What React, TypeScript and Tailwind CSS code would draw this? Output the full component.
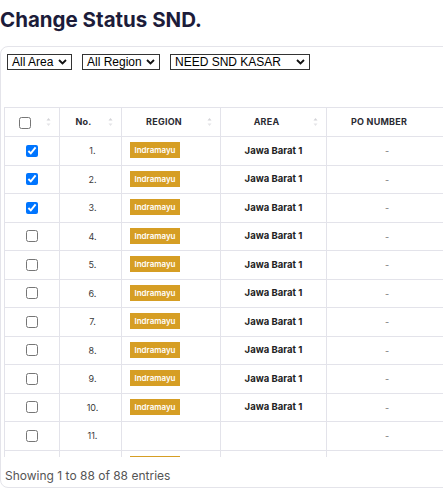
const rows = Array.from({ length: 12 }, (_, i) => ({
  no: i + 1,
  checked: i < 3,
  region: i === 10 ? '' : 'Indramayu',
  area: i === 10 ? '' : 'Jawa Barat 1',
}));

function Chevron() {
  return (
    <svg width="9" height="6" viewBox="0 0 9 6" className="ml-1 shrink-0">
      <path d="M1 1l3.5 3.5L8 1" fill="none" stroke="#111" strokeWidth="1.8" />
    </svg>
  );
}

function FakeSelect({ label, width }: { label: string; width: string }) {
  return (
    <div
      className={`flex items-center justify-between h-[16px] border border-[#333] bg-white px-[4px] text-[12px] text-black ${width}`}
      style={{ fontFamily: '"Liberation Sans", Arial, sans-serif' }}
    >
      <span className="leading-none">{label}</span>
      <Chevron />
    </div>
  );
}

function SortIcon() {
  return (
    <svg width="5" height="9" viewBox="0 0 5 9" className="absolute right-[8px] top-1/2 -translate-y-1/2">
      <path d="M2.5 0.5L4.5 3H0.5z" fill="#d4d4d8" />
      <path d="M2.5 8.5L4.5 6H0.5z" fill="#e4e4e7" />
    </svg>
  );
}

function Th({ children, className = 'pr-[14px]' }: { children?: React.ReactNode; className?: string }) {
  return (
    <th className={`relative border-r border-[#e3e3ea] h-[29px] text-[9px] font-bold text-[#2b2b33] tracking-wide ${className}`}>
      {children}
      <SortIcon />
    </th>
  );
}

export default function App() {
  return (
    <div className="w-[443px] h-[489px] overflow-hidden bg-white" style={{ fontFamily: 'Inter, "Noto Sans", sans-serif' }}>
      <h1 className="h-[46px] pt-[7px] text-[20.5px] font-bold text-[#1c1c3a] leading-[26px]">
        Change Status SND.
      </h1>
      <div className="w-[460px] h-[442px] border border-[#e4e4ea] rounded-[8px] flex flex-col">
        <div className="flex pl-[6px] pt-[7px] h-[60px] items-start gap-[10px]">
          <FakeSelect label="All Area" width="w-[65px]" />
          <FakeSelect label="All Region" width="w-[78px]" />
          <FakeSelect label="NEED SND KASAR" width="w-[140px]" />
        </div>
        <div className="h-[350px] overflow-hidden pl-[3px]">
          <table className="border-collapse border-l border-t border-[#e3e3ea] table-fixed w-[520px]">
            <colgroup>
              <col className="w-[55px]" />
              <col className="w-[62px]" />
              <col className="w-[99px]" />
              <col className="w-[106px]" />
              <col className="w-[198px]" />
            </colgroup>
            <thead>
              <tr className="border-b border-[#e3e3ea]">
                <Th>
                  <input type="checkbox" className="w-[12px] h-[12px] align-middle" readOnly />
                </Th>
                <Th>No.</Th>
                <Th>REGION</Th>
                <Th>AREA</Th>
                <Th className="text-left pl-[24px]">PO NUMBER</Th>
              </tr>
            </thead>
            <tbody>
              {rows.map((r) => (
                <tr key={r.no} className="border-b border-[#e3e3ea] h-[28.5px]">
                  <td className="border-r border-[#e3e3ea] text-center align-middle p-0 pb-[3px]">
                    <input
                      type="checkbox"
                      checked={r.checked}
                      readOnly
                      className="w-[12px] h-[12px] align-middle"
                    />
                  </td>
                  <td className="border-r border-[#e3e3ea] text-center align-middle text-[9px] text-[#3a3a3a] p-0 pl-[4px]">{r.no}.</td>
                  <td className="border-r border-[#e3e3ea] align-middle pl-[8px] p-0 pb-[1px]">
                    {r.region && (
                      <div className="flex items-center justify-center w-[50px] h-[16px] bg-[#d69e24] text-white text-[8px] font-semibold">
                        {r.region}
                      </div>
                    )}
                  </td>
                  <td className="border-r border-[#e3e3ea] text-center align-middle text-[9.5px] font-bold text-[#222] p-0">{r.area}</td>
                  <td className="border-r border-[#e3e3ea] align-middle text-[9px] text-[#777] pl-[58px] p-0">-</td>
                </tr>
              ))}
            </tbody>
          </table>
        </div>
        <div className="flex-1 flex items-center pl-[4px] pt-[8px] text-[12px] text-[#555]">
          Showing 1 to 88 of 88 entries
        </div>
      </div>
    </div>
  );
}
